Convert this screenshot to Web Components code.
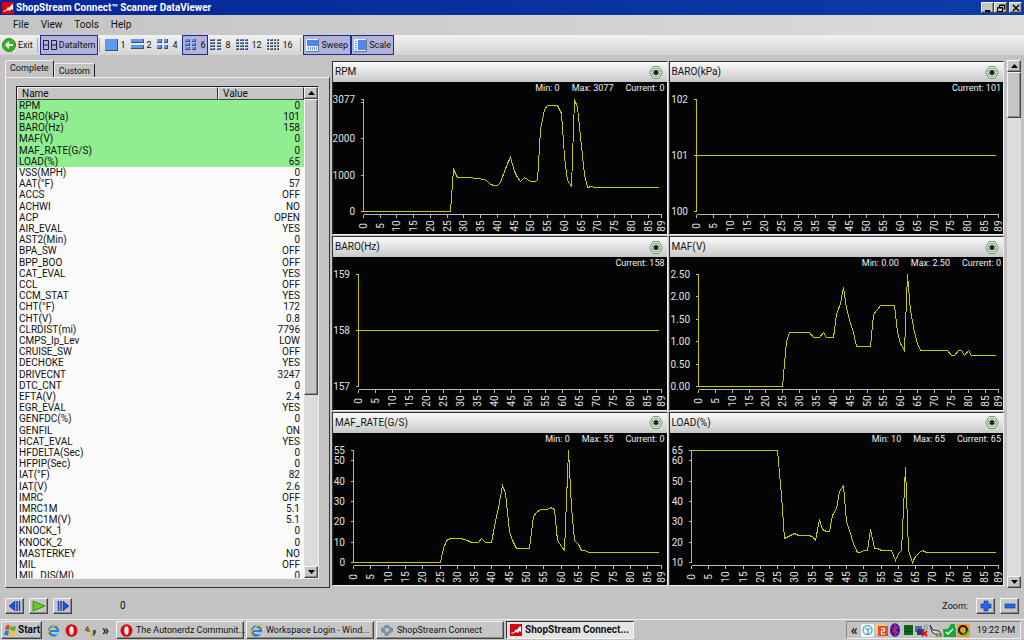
<!DOCTYPE html>
<html lang="en">
<head>
<meta charset="utf-8">
<title>ShopStream Connect Scanner DataViewer</title>
<style>
  html, body { height: 100%; margin: 0; }
  body { background: #c3c3c3; overflow: hidden; }
</style>
</head>
<body>
<data-viewer></data-viewer>
<script>
const ICONS = {
  app: ['0 0 12 12', '<rect width="12" height="12" fill="#d80010"/><path d="M1 9l3-1 2-3 1 1 3-4 1 1v5l-2-1-1 2-2-1-2 1-2 1z" fill="#fff"/>'],
  exit: ['0 0 14 14', '<circle cx="7" cy="7" r="6.5" fill="#3fae2a" stroke="#1f8a1c"/><path d="M3 7l4-4v3h4v2H7v3z" fill="#fff"/>'],
  digits: ['0 0 14 12', '<g fill="none" stroke="#223" stroke-width="1"><path d="M.5 1.5h5v9h-5zM.5 6h5M8.500 1.500h5v9h-5zM8.500 6h5"/></g>'],
  sweep: ['0 0 13 13', '<rect width="13" height="13" fill="#707888"/><rect width="12" height="12" fill="#eef4ff"/><rect x="1" y="1" width="11" height="6" fill="#4c88f0"/><path d="M2.500 8v3M4.500 8v3M6.500 8v3M8.500 8v3M10.500 8v3" stroke="#6c98e8"/>'],
  scale: ['0 0 13 13', '<rect width="13" height="13" fill="#707888"/><rect width="12" height="12" fill="#eef4ff"/><rect x="4" y="1" width="8" height="10" fill="#4c88f0"/><path d="M1 2.500h2M1 4.500h2M1 6.500h2M1 8.500h2M1 10.500h2" stroke="#6c98e8"/>'],
  hex: ['0 0 14 13', '<path d="M4 .5h6l3.500 6-3.500 6H4L.5 6.500z" fill="#e4efe4" stroke="#858d85"/><circle cx="7" cy="6.500" r="4.200" fill="#c8f0c8" stroke="#7b9c7b"/><circle cx="7" cy="6.500" r="2.500" fill="#222"/>'],
  back: ['0 0 12 12', '<path d="M6 1v10L0 6z" fill="#1c50e0" stroke="#0a2a90" stroke-width=".5"/><path d="M8 1v10M10.500 1v10" stroke="#1240c0" stroke-width="1.500"/>'],
  play: ['0 0 14 12', '<path d="M1 1l12 5-12 5z" fill="#6cc81c" stroke="#3c8c10"/>'],
  next: ['0 0 12 12', '<path d="M6 1v10l6-5z" fill="#1c50e0" stroke="#0a2a90" stroke-width=".5"/><path d="M1.500 1v10M4 1v10" stroke="#1240c0" stroke-width="1.500"/>'],
  plus: ['0 0 12 12', '<path d="M4 1h4v3h3v4H8v3H4V8H1V4h3z" fill="#2c64e8" stroke="#123c9c" stroke-width=".7"/>'],
  minus: ['0 0 12 12', '<path d="M1 4h10v4H1z" fill="#2c64e8" stroke="#123c9c" stroke-width=".7"/>'],
  windows: ['0 0 13 13', '<path d="M2 2q2-2 4-.5L5 6Q3 5 1 6z" fill="#e84820"/><path d="M7 2q2 1 5 0l-1 4.500Q8 7 6 6z" fill="#50b030"/><path d="M1 7q2-1 4 0l-1 4.500Q2 10.500 0 11.500z" fill="#2878e0"/><path d="M6 7q2 1 5 .5L10 12q-3 1-5-.5z" fill="#f8c020"/>'],
  ie: ['0 0 13 13', '<circle cx="6.500" cy="7" r="4.500" fill="none" stroke="#2484dc" stroke-width="2.400"/><path d="M3 7h8" stroke="#2484dc" stroke-width="2"/><path d="M8 10.500h5V8.200H8z" fill="#c3c3c3"/><path d="M.8 12C-1 8 7-.5 12.500 1" fill="none" stroke="#f0b828" stroke-width="1.300"/>'],
  opera: ['0 0 13 13', '<ellipse cx="6.500" cy="6.500" rx="6" ry="6.300" fill="#d80c10"/><ellipse cx="6.500" cy="6.500" rx="2.200" ry="4.300" fill="#f4e8e8"/>'],
  wave: ['0 0 14 13', '<path d="M0 7h2q2-9 4 0z" fill="#d03020"/><path d="M4 2q2 0 3 6H4z" fill="#30a040"/><path d="M7 7q1 9 3 5V7z" fill="#e8c020"/><path d="M10 6h3v2q-1 4-3 4z" fill="#2850c8"/>'],
  gear: ['0 0 14 14', '<rect x="2" width="10" height="13" fill="#a8d0ec"/><path d="M1 5l3-1 1-2h4l1 2 3 1v4l-3 1-2 3H5l-1-3-3-1z" fill="#888f96"/><circle cx="7" cy="7" r="2" fill="#c4c8cc"/>'],
  trayClock: ['0 0 13 13', '<rect width="13" height="13" rx="2" fill="#f4fafc"/><circle cx="6.500" cy="6" r="4.500" fill="none" stroke="#58b0d8" stroke-width="1.500"/><path d="M4 4l3 2v5M9 4L7 6" stroke="#3080b8" fill="none"/>'],
  trayTwo: ['0 0 13 13', '<rect width="11" height="9" fill="#f0c890"/><rect x="3" y="2" width="10" height="10" fill="#e05020"/><path d="M6 4.500h3.500v2.500H6.500V10H10" fill="none" stroke="#fff" stroke-width="1.200"/>'],
  bluetooth: ['0 0 12 14', '<ellipse cx="6" cy="7" rx="5" ry="6.700" fill="#1020c8"/><path d="M3 4.500l5.500 5L6 12V2l2.500 2.500L3 9.500" fill="none" stroke="#f02040" stroke-width="1.200"/>'],
  grid: ['0 0 12 12', '<rect x="2" y="1" width="9" height="10" fill="#0a7020"/><path d="M2 4h9M2 7.500h9M5 1v10M8 1v10" stroke="#003c08" stroke-width=".7"/>'],
  net: ['0 0 13 13', '<rect y="2" width="7" height="6" fill="#5868a8"/><rect x="2" y="5" width="7" height="6" fill="#303c78"/><path d="M9 1q2 3 0 5M11 0q3 4 0 7" fill="none" stroke="#888"/><path d="M7 7l5 5M12 7l-5 5" stroke="#e01010" stroke-width="1.800"/>'],
  usb: ['0 0 13 13', '<path d="M1 1l3 5 6 1 2 3-4 1-5-3z" fill="#ddd" stroke="#333"/><path d="M8 9l5 3H7z" fill="#f0d000" stroke="#333" stroke-width=".6"/>'],
  check: ['0 0 13 13', '<path d="M0 5h5l3-5h4v4h1v9H1z" fill="#18a838"/><path d="M3 8l2 2 5-5" fill="none" stroke="#fff" stroke-width="1.500"/>'],
  norton: ['0 0 13 13', '<rect width="13" height="13" fill="#f0a020"/><circle cx="6" cy="6" r="4" fill="none" stroke="#181818" stroke-width="2.200"/><path d="M6 9l2 2 4-5" fill="none" stroke="#30b040" stroke-width="1.800"/>'],
  up: ['0 0 7 4', '<path d="M0 4h7L3.500 0z" fill="#000"/>'],
  down: ['0 0 7 4', '<path d="M0 0h7L3.500 4z" fill="#000"/>'],
  min: ['0 0 8 8', '<path d="M1 7h5" stroke="#000" stroke-width="2"/>'],
  restore: ['0 0 8 8', '<path d="M2.500 3V1h5v4H6M.5 3.500h5v4h-5z M.5 4h5M2.500 1.500h5" fill="none" stroke="#000"/>'],
  close: ['0 0 8 8', '<path d="M1 1l6 6M7 1L1 7" stroke="#000" stroke-width="1.500"/>']
};

/* Tiled-layout glyph: cols x rows of blue panes with a dark lower-right edge. */
function tiles(cols, rows) {
  const n = cols * rows, w = 13 / cols, h = 12 / rows;
  const gapX = n > 1 ? (cols === 2 ? 2 : 1) : 0, gapY = n > 1 ? (rows < 3 ? 2 : 1) : 0;
  let s = '';
  for (let r = 0; r < rows; r++) for (let c = 0; c < cols; c++) {
    const x = Math.round(c * w), y = Math.round(r * h);
    const tw = Math.round((c + 1) * w) - x - (cols > 1 ? gapX : 0), th = Math.round((r + 1) * h) - y - gapY;
    s += `<rect x="${x}" y="${y}" width="${tw}" height="${th}" fill="#48505c"/>` +
         `<rect x="${x}" y="${y}" width="${Math.max(tw - 1, 1)}" height="${Math.max(th - 1, 1)}" fill="#5c98f4"/>`;
  }
  return s;
}
[[1, 1, 1], [2, 1, 2], [4, 2, 2], [6, 2, 3], [8, 2, 4], [12, 3, 4], [16, 4, 4]]
  .forEach(([n, c, r]) => { ICONS['tile' + n] = ['0 0 13 12', tiles(c, r)]; });

const BASE = `
  :host { box-sizing: border-box; }
  *, *::before, *::after { box-sizing: border-box; }
  button { font: inherit; color: inherit; margin: 0; padding: 0; border: 0; background: none; white-space: nowrap; }
  .raised { background: #c6c6c6; border: 1px solid; border-color: #f4f4f4 #444 #444 #f4f4f4; box-shadow: inset -1px -1px #8c8c8c; }
`;

function define(name, css, html, extra) {
  const tpl = document.createElement('template');
  customElements.define(name, class extends HTMLElement {
    connectedCallback() {
      if (this.shadowRoot) return;
      const root = this.attachShadow({ mode: 'open' });
      tpl.innerHTML = `<style>${BASE}${css}</style>` + (typeof html === 'function' ? html(this) : html);
      root.append(tpl.content.cloneNode(true));
      if (extra) extra(this, root);
    }
  });
}

define('ui-icon', ':host { display: inline-flex; flex: none; } svg { display: block; }', el => {
  const [box, body] = ICONS[el.getAttribute('name')];
  const [, , w, h] = box.split(' ');
  return `<svg viewBox="${box}" width="${w}" height="${h}" aria-hidden="true">${body}</svg>`;
});

define('title-bar', `
  :host { display: flex; align-items: center; height: 15px; padding: 0 2px; gap: 2px; color: #fff;
    font-weight: bold; background: linear-gradient(90deg, #06259a, #0c3ca8); }
  h1 { font: inherit; margin: 0; flex: 1; }
  .b { display: flex; }
  button { width: 13px; height: 11px; display: grid; place-items: center; }
  button:last-child { margin-left: 2px; }`,
  `<ui-icon name="app"></ui-icon><h1>ShopStream Connect™ Scanner DataViewer</h1>
   <div class="b"><button class="raised" aria-label="Minimize"><ui-icon name="min"></ui-icon></button><button class="raised" aria-label="Restore"><ui-icon name="restore"></ui-icon></button><button class="raised" aria-label="Close"><ui-icon name="close"></ui-icon></button></div>`);

define('menu-bar', `
  :host { display: flex; height: 20px; align-items: center; gap: 12px; padding: 0 13px; background: linear-gradient(90deg, #c4c4c4, #dcdcdc); }`,
  `<button>File</button><button>View</button><button>Tools</button><button>Help</button>`);

define('tool-button', `
  :host { display: flex; }
  button { display: flex; align-items: center; gap: 2px; height: 20px; padding: 0 2px; border: 1px solid transparent; }
  :host([on]) button { background: #b2b2dc; border-color: #1c2c94; }`,
  el => `<button aria-pressed="${el.hasAttribute('on')}"><ui-icon name="${el.getAttribute('icon')}"></ui-icon><slot></slot></button>`);

define('tool-bar', `
  :host { display: flex; height: 20px; align-items: center; font-size: 9px; background: linear-gradient(#f2f2f2, #d4d4d4); }
  i { width: 1px; height: 14px; background: #aaa; margin: 0 2px 0 1px; }
  .lay { display: grid; grid-template-columns: 26px 26px 28px 25px 26px 31px 35px; }
  .exit { margin-left: -1px; }`,
  () => `<tool-button class="exit" icon="exit">Exit</tool-button><i></i><tool-button icon="digits" on>DataItem</tool-button><i></i>
   <div class="lay">${[1, 2, 4, 6, 8, 12, 16].map(n => `<tool-button icon="tile${n}"${n === 6 ? ' on' : ''}>${n}</tool-button>`).join('')}</div>
   <i></i><tool-button icon="sweep" on>Sweep</tool-button><tool-button icon="scale" on>Scale</tool-button>`);

define('scroll-bar', `
  :host { display: flex; flex-direction: column; width: 14px; background: #dcdcdc; }
  button { height: 12px; display: grid; place-items: center; flex: none; }
  .thumb { height: var(--thumb, 46px); }
  span { flex: 1; }`,
  `<button class="raised" aria-label="Scroll up"><ui-icon name="up"></ui-icon></button>
   <div class="thumb raised"></div><span></span>
   <button class="raised" aria-label="Scroll down"><ui-icon name="down"></ui-icon></button>`);

const ITEMS = 'RPM|0,BARO(kPa)|101,BARO(Hz)|158,MAF(V)|0,MAF_RATE(G/S)|0,LOAD(%)|65,VSS(MPH)|0,AAT(°F)|57,ACCS|OFF,ACHWI|NO,ACP|OPEN,AIR_EVAL|YES,AST2(Min)|0,BPA_SW|OFF,BPP_BOO|OFF,CAT_EVAL|YES,CCL|OFF,CCM_STAT|YES,CHT(°F)|172,CHT(V)|0.8,CLRDIST(mi)|7796,CMPS_Ip_Lev|LOW,CRUISE_SW|OFF,DECHOKE|YES,DRIVECNT|3247,DTC_CNT|0,EFTA(V)|2.4,EGR_EVAL|YES,GENFDC(%)|0,GENFIL|ON,HCAT_EVAL|YES,HFDELTA(Sec)|0,HFPIP(Sec)|0,IAT(°F)|82,IAT(V)|2.6,IMRC|OFF,IMRC1M|5.1,IMRC1M(V)|5.1,KNOCK_1|0,KNOCK_2|0,MASTERKEY|NO,MIL|OFF,MIL_DIS(MI)|0';

define('data-list', `
  :host { display: flex; flex-direction: column; min-height: 0; }
  .tabs { display: flex; align-items: flex-end; height: 17px; font-size: 9px; }
  .tabs button { height: 14px; padding: 0 4px; border: 1px solid; border-color: #eee #222 transparent #eee; border-bottom: 0; border-radius: 2px 2px 0 0; line-height: 12px; }
  .tabs button[aria-selected=true] { height: 17px; padding: 0 4px 2px; }
  .page { flex: 1; min-height: 0; padding: 8px 10px; border: 1px solid; border-color: #eee #333 #333 #eee; display: flex; }
  .box { flex: 1; min-height: 0; display: flex; border: 1px solid; border-color: #222 #eee #eee #222; background: #fafafa; }
  .view { flex: 1; overflow: hidden; }
  table { width: 100%; border-collapse: separate; border-spacing: 0; table-layout: fixed; }
  th { height: 13px; line-height: 11px; padding: 0 4px; text-align: left; font-weight: normal; background: #c6c6c6; border: 1px solid; border-color: #eee #333 #444 #eee; }
  th:last-child { width: 86px; }
  td { height: 11px; line-height: 11px; padding: 0 2px; white-space: nowrap; }
  tr:nth-child(5n) td { height: 12px; }
  td:last-child { text-align: right; padding-right: 4px; }
  tr:nth-child(-n+6) td { background: #90ee90; }
  scroll-bar { --thumb: 296px; }`,
  () => `<div class="tabs" role="tablist"><button role="tab" aria-selected="true">Complete</button><button role="tab" aria-selected="false">Custom</button></div>
  <div class="page"><div class="box"><div class="view"><table><thead><tr><th>Name</th><th>Value</th></tr></thead><tbody>${
    ITEMS.split(',').map(r => '<tr><td>' + r.replace('|', '</td><td>') + '</td></tr>').join('')
  }</tbody></table></div><scroll-bar></scroll-bar></div></div>`);

const FLAT = v => [[0, v], [88, v]];
const TRACES = {
  'RPM': { lo: 0, hi: 3077, left: 30, ticks: [0, 1000, 2000, 3000, 3077], hide: [3000], stats: ['Min: 0', 'Max: 3077', 'Current: 0'],
    pts: [[0,0],[26,0],[27,1145],[28,943],[29,925],[31,925],[34,897],[36,880],[37,833],[38,750],[39,723],[40,723],[41,806],[42,1100],[43,1310],[44,1493],[45,1100],[46,925],[47,833],[48,943],[49,880],[50,815],[51,815],[52,843],[53,2244],[54,2811],[55,2903],[56,2921],[58,2921],[59,2700],[60,1511],[61,850],[62,696],[63,3077],[64,2857],[65,1786],[66,1007],[67,660],[68,687],[69,668],[88,668]] },
  'BARO(kPa)': { lo: 100, hi: 102, left: 26, ticks: [100, 101, 102], stats: ['Current: 101'], pts: FLAT(101) },
  'BARO(Hz)': { lo: 157, hi: 159, left: 25, ticks: [157, 158, 159], stats: ['Current: 158'], pts: FLAT(158) },
  'MAF(V)': { lo: 0, hi: 2.5, left: 28, dec: 2, ticks: [0, .5, 1, 1.5, 2, 2.5], stats: ['Min: 0.00', 'Max: 2.50', 'Current: 0'],
    pts: [[0,0],[25,0],[26,1],[27,1.2],[33,1.2],[34,1.1],[36,1.1],[37,1.2],[38,1.1],[40,1.1],[41,1.6],[42,1.85],[43,2.2],[44,1.75],[45,1.4],[46,1.2],[47,.9],[51,.9],[52,1.6],[54,1.8],[58,1.8],[59,1.2],[60,.97],[61,.8],[62,2.5],[63,1.7],[64,1.2],[65,.97],[66,.8],[74,.8],[75,.7],[76,.7],[77,.8],[78,.8],[79,.7],[80,.8],[81,.7],[88,.7]] },
  'MAF_RATE(G/S)': { lo: 0, hi: 55, left: 20, ticks: [0, 10, 20, 30, 40, 50, 55], stats: ['Min: 0', 'Max: 55', 'Current: 0'],
    pts: [[0,0],[25,0],[26,7],[27,11],[28,12],[31,12],[32,11.5],[33,11],[34,10],[36,10],[37,12],[38,10],[40,10],[41,20],[42,27],[43,38],[44,34],[45,15],[46,11],[47,7],[51,7],[52,22.5],[53,24.5],[54,26],[56,26],[57,27],[58,26],[59,11],[60,8],[61,6],[62,55],[63,27],[64,11],[65,9],[66,6],[67,6],[68,5],[88,5]] },
  'LOAD(%)': { lo: 10, hi: 65, left: 21, ticks: [10, 20, 30, 40, 50, 60, 65], stats: ['Min: 10', 'Max: 65', 'Current: 65'],
    pts: [[0,65],[25,65],[26,43],[27,22],[28,22.6],[30,24],[31,23.5],[34,23.5],[35,22.6],[36,21],[37,31],[38,26],[39,25.3],[40,25.3],[41,33],[42,36.5],[43,45],[44,48],[45,30],[46,24],[47,19.5],[48,15],[49,15],[50,16],[51,16],[52,26],[53,17],[54,17],[55,16],[58,16],[59,11],[60,14.5],[61,16],[62,56.5],[63,16],[64,10],[65,13],[66,15],[67,16],[68,15],[88,15]] }
};

define('trace-chart', `
  :host { display: flex; flex-direction: column; min-width: 0; min-height: 0; background: #040404; border: 1px solid #333; border-right-color: #eee; border-bottom-color: #eee; }
  header { display: flex; align-items: center; justify-content: space-between; height: 20px; padding: 0 4px 0 2px; color: #111; background: linear-gradient(#fafafa, #c8c8c8); }
  h2 { font: inherit; margin: 0; }
  button { display: flex; }
  .stats { display: flex; justify-content: flex-end; gap: 12px; padding-right: 2px; height: 12px; font-size: 9px; line-height: 12px; color: #f0f0f0; }
  .plot { flex: 1; min-height: 0; overflow: hidden; }
  svg { display: block; }
  text { fill: #e0e0e0; }`,
  el => `<header><h2>${el.getAttribute('item')}</h2><button aria-label="Options for ${el.getAttribute('item')}"><ui-icon name="hex"></ui-icon></button></header>
   <div class="stats">${TRACES[el.getAttribute('item')].stats.map(s => `<span>${s}</span>`).join('')}</div><div class="plot"></div>`,
  (el, root) => {
    const t = TRACES[el.getAttribute('item')], plot = root.querySelector('.plot');
    const draw = () => {
      const w = plot.clientWidth, h = plot.clientHeight;
      if (!w || !h) return;
      const right = w - 6, top = 5, base = h - 23, axis = base + 3;
      const X = i => t.left + i * (right - t.left) / 89;
      const Y = v => base - (v - t.lo) * (base - top) / (t.hi - t.lo);
      let grey = `M${t.left} ${axis}H${right}`, labels = '';
      for (let i = 0; i <= 89; i += i === 85 ? 4 : 5) {
        const x = Math.round(X(i));
        grey += `M${x} ${axis}v3`;
        labels += `<text transform="translate(${x + 4} ${axis + 12}) rotate(-90)" text-anchor="middle">${i}</text>`;
      }
      t.ticks.forEach(v => {
        const y = Math.round(Y(v));
        grey += `M${t.left} ${y}h-3`;
        if (!(t.hide || []).includes(v)) labels += `<text x="${t.left - 8}" y="${y + 4}" text-anchor="end">${v.toFixed(t.dec || 0)}</text>`;
      });
      plot.innerHTML = `<svg width="${w}" height="${h}" role="img" aria-label="Trace">
        <g transform="translate(.5 .5)" fill="none" shape-rendering="crispEdges"><path d="${grey}" stroke="#b8b8b8"/>
        <path d="M${t.left} ${top}V${base}" stroke="#c8c800"/>
        <polyline points="${t.pts.map(([i, v]) => Math.round(X(i)) + ',' + Math.round(Y(v))).join(' ')}" stroke="#c8c800"/></g>${labels}</svg>`;
    };
    draw();
    new ResizeObserver(draw).observe(plot);
  });

define('playback-bar', `
  :host { display: flex; align-items: center; height: 31px; padding: 4px 5px 0; gap: 5px; }
  button { width: 19px; height: 16px; display: grid; place-items: center; }
  output { flex: 1; padding-left: 43px; }
  span { padding-right: 3px; font-size: 9px; }`,
  `<button class="raised" aria-label="Step back"><ui-icon name="back"></ui-icon></button><button class="raised" aria-label="Play"><ui-icon name="play"></ui-icon></button><button class="raised" aria-label="Step forward"><ui-icon name="next"></ui-icon></button>
   <output>0</output><span>Zoom:</span><button class="raised" aria-label="Zoom in"><ui-icon name="plus"></ui-icon></button><button class="raised" aria-label="Zoom out"><ui-icon name="minus"></ui-icon></button>`);

define('task-button', `
  :host { display: flex; flex: 0 1 128px; min-width: 0; }
  button { flex: 1; min-width: 0; display: flex; align-items: center; gap: 3px; height: 18px; padding: 0 3px; font-size: 9px; }
  :host([on]) button { background: #e4e4e4; border-color: #333 #f4f4f4 #f4f4f4 #333; box-shadow: none; font-size: 10px; font-weight: bold; }`,
  el => `<button class="raised"><ui-icon name="${el.getAttribute('icon')}"></ui-icon><span><slot></slot></span></button>`);

define('task-bar', `
  :host { display: flex; align-items: center; height: 21px; padding: 0 3px 0 1px; gap: 5px; border-top: 1px solid #eee; }
  .start { display: flex; align-items: center; gap: 1px; height: 18px; width: 41px; padding: 0 2px; font-weight: bold; }
  .quick { display: flex; align-items: center; gap: 5px; }
  .tasks { flex: 1; display: flex; gap: 2px; min-width: 0; }
  .tray { display: flex; align-items: center; gap: 1px; height: 18px; padding: 0 5px 0 4px; border: 1px solid; border-color: #888 #eee #eee #888; }
  time { padding-left: 6px; font-size: 9px; }
  .more { font-weight: bold; font-size: 14px; line-height: 12px; width: 9px; }`,
  `<button class="start raised"><ui-icon name="windows"></ui-icon>Start</button>
   <div class="quick"><ui-icon name="ie"></ui-icon><ui-icon name="opera"></ui-icon><ui-icon name="wave"></ui-icon><span class="more">»</span></div>
   <div class="tasks"><task-button icon="opera">The Autonerdz Communit...</task-button><task-button icon="ie">Workspace Login - Wind...</task-button><task-button icon="gear">ShopStream Connect</task-button><task-button icon="app" on>ShopStream Connect...</task-button></div>
   <div class="tray"><span class="more">«</span><ui-icon name="trayClock"></ui-icon><ui-icon name="trayTwo"></ui-icon><ui-icon name="bluetooth"></ui-icon><ui-icon name="grid"></ui-icon><ui-icon name="net"></ui-icon><ui-icon name="usb"></ui-icon><ui-icon name="check"></ui-icon><ui-icon name="norton"></ui-icon><time>19:22 PM</time></div>`);

define('data-viewer', `
  :host { display: flex; flex-direction: column; height: 100vh; background: #c3c3c3; color: #111;
    font: 10px/14px Roboto, "Liberation Sans", sans-serif; }
  main { flex: 1; min-height: 0; display: grid; grid-template-columns: 325px minmax(0, 1fr) 14px; gap: 2px; padding: 5px 3px 0 5px; }
  .charts { display: grid; grid-template-columns: 1fr 1fr; grid-template-rows: repeat(3, 1fr); gap: 1px; min-height: 0; padding: 1px 1px 2px 0; }`,
  () => `<title-bar></title-bar><menu-bar></menu-bar><tool-bar></tool-bar>
   <main><data-list></data-list><div class="charts">${Object.keys(TRACES).map(k => `<trace-chart item="${k}"></trace-chart>`).join('')}</div><scroll-bar></scroll-bar></main>
   <playback-bar></playback-bar><task-bar></task-bar>`);
</script>
</body>
</html>
